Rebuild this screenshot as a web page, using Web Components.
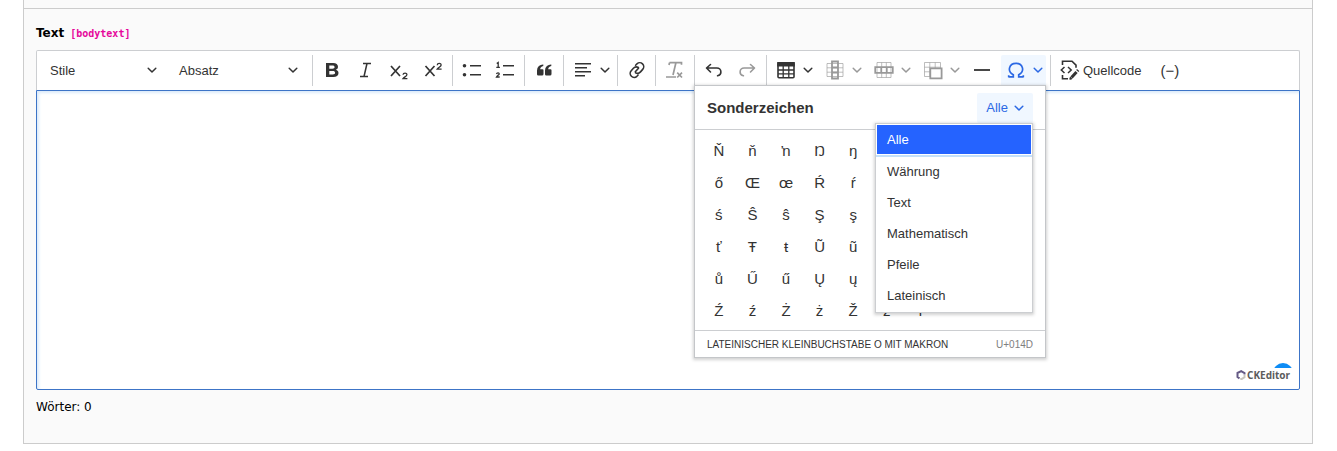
<!DOCTYPE html>
<html lang="de">
<head>
<meta charset="utf-8">
<title>Text bearbeiten</title>
<style>
body { margin: 0; background: #fff; font-family: "Liberation Sans", Arial, sans-serif; font-size: 13px; color: #333; }
</style>
</head>
<body>
<form-panel>
  <form-field label="Text" name="bodytext">
    <rich-editor></rich-editor>
  </form-field>
</form-panel>

<script>
const ICONS = {
  bold: '<path fill="currentColor" stroke="none" fill-rule="evenodd" d="M4 3h7.2c3 0 4.8 1.400 4.800 3.700 0 1.500-.8 2.600-2.200 3.100 1.700.4 2.700 1.600 2.700 3.300 0 2.600-2 3.900-5.200 3.900H4zm3.300 2.500v3.200h3.100c1.400 0 2.200-.6 2.200-1.600s-.8-1.600-2.200-1.600zm0 5.600v3.400h3.400c1.600 0 2.400-.6 2.400-1.700s-.8-1.700-2.400-1.700z"/>',
  italic: '<path d="M7 3.500h8M4 16.500h8M11 3.500l-3 13" stroke-width="1.500"/>',
  sub: '<path d="M2 6l9 10M11 6l-9 10" stroke-width="1.700"/><path d="M14 14.800c.2-2.400 4-2.300 3.900-.1-.1 1.500-2.700 2.300-3.900 4h4.400" stroke-width="1.300"/>',
  sup: '<path d="M2.500 6l9 10M11.500 6l-9 10" stroke-width="1.700"/><path d="M14.200 5.200c.2-2.400 4-2.300 3.900-.1-.1 1.500-2.700 2.300-3.900 4h4.400" stroke-width="1.300"/>',
  ul: '<path d="M8 5.750h11M8 14.750h11" stroke-width="1.600"/><g fill="currentColor" stroke="none"><circle cx="2.500" cy="5.750" r="1.800"/><circle cx="2.500" cy="14.750" r="1.800"/></g>',
  ol: '<path d="M8 5.750h11M8 14.750h11" stroke-width="1.600"/><path d="M1.700 3.500l1.500-1v4.600M1.300 7.300h3.600M1.500 14c.4-1.500 3-1.300 2.700.1-.2.900-1.900 1.500-2.700 2.900h3.200" stroke-width="1.300"/>',
  quote: '<path fill="currentColor" stroke="none" d="M3 10.400a6 6 0 0 1 6.300-6v1.500c-2 .4-3 1.600-3.100 3.300h2.300a1 1 0 0 1 1 1V14a1.500 1.500 0 0 1-1.500 1.500H4.300A1.300 1.300 0 0 1 3 14.200zM11 10.400a6 6 0 0 1 6.300-6v1.500c-2 .4-3 1.600-3.100 3.300h2.300a1 1 0 0 1 1 1V14a1.500 1.500 0 0 1-1.500 1.500h-3.700a1.300 1.300 0 0 1-1.300-1.300z"/>',
  align: '<path d="M2 3.750h16M2 7.750h12M2 11.750h16M2 15.750h10" stroke-width="1.500"/>',
  link: '<g stroke-width="1.600" stroke-linecap="round"><path d="M11.100 15l-1.200 1.300a4 4 0 0 1-5.700-5.600l2.200-2.500a4 4 0 0 1 5-.7M8.600 5.200L10 3.800a4 4 0 0 1 5.700 5.600l-2.200 2.500a4 4 0 0 1-5 .9M8.300 11.800l3.200-3.600"/></g>',
  clear: '<path d="M4.500 2.700h12v2M4.500 2.700L4 5M10.900 2.700L8 15M1 17h10" stroke-width="1.700"/><path d="M12.200 12.700l4.800 4.800M17 12.700l-4.800 4.800" stroke-width="1.700"/>',
  undo: '<path d="M6.500 4.500L2.500 8l4 4M2.700 8h10.200a4 4 0 0 1 4 4c0 1.900-1 3.300-3.300 3.800" stroke-width="1.600" stroke-linecap="round" stroke-linejoin="round"/>',
  redo: '<path d="M13.500 4.500l4 3.500-4 4M17.300 8H7.100a4 4 0 0 0-4 4c0 1.900 1 3.300 3.300 3.800" stroke-width="1.600" stroke-linecap="round" stroke-linejoin="round"/>',
  table: '<rect x="2" y="2.800" width="16" height="14.900" rx="1" stroke-width="1.600"/><path fill="currentColor" stroke="none" d="M1.200 2h17.600v4.500H1.200z"/><path d="M7.200 6v12M12.800 6v12M2 10h16M2 13.800h16" stroke-width="1.300"/>',
  column: '<path d="M2 3.500h16v13H2zM2 7.800h16M2 12.200h16" stroke-width="1" opacity=".65"/><path d="M7 1.500h6v17H7zM7 7.500h6M7 12.500h6" stroke-width="1.800"/>',
  row: '<path d="M3 2.500h14v15H3zM7.700 2.500v15M12.300 2.500v15" stroke-width="1" opacity=".65"/><path d="M1.200 7.200h17.600v5.600H1.200zM7.200 7.200v5.600M12.800 7.200v5.600" stroke-width="1.700"/>',
  merge: '<path d="M1.500 2.500h16v14h-16zM6.800 2.500v14M12.200 2.500v6M1.500 7.200h16M1.500 11.800h6" stroke-width="1" opacity=".65"/><path fill="#fff" d="M7.300 8.300h11.300v10H7.300z" stroke-width="1.800"/>',
  line: '<path d="M2 10h16" stroke-width="1.800"/>',
  omega: '<path d="M2.500 16.800h4.800v-2C1 11.500 2.700 3.300 10 3.300s9 8.200 2.700 11.500v2h4.800M2.700 17.300v-2M17.300 17.300v-2" stroke-width="1.700"/>',
  source: '<path d="M2.500 5V1.200h9.500l4 4v2.500M2.500 15v3.800h5.500" stroke-width="1.600"/><path d="M4.500 7l-3.200 3 3.200 3M8 7l3.200 3L8 13" stroke-width="1.500"/><path d="M11.500 17.500l5-5.500" stroke-width="3"/><path d="M9.800 19.300l.5-2.200 1.700 1.700z" fill="currentColor"/><path d="M17.300 11l.8-.9" stroke-width="3"/>'
};
const svg = (name, size = 20) =>
  `<svg width="${size}" height="${size}" viewBox="0 0 20 20" fill="none" stroke="currentColor" aria-hidden="true">${ICONS[name]}</svg>`;
const CHEVRON = '<svg class="chevron" width="10" height="10" viewBox="0 0 10 10" fill="none" stroke="currentColor" stroke-width="1.500" stroke-linecap="round" stroke-linejoin="round" aria-hidden="true"><path d="M1.200 3.300L5 7l3.800-3.700"/></svg>';

const define = (name, render) => customElements.define(name, class extends HTMLElement {
  constructor() {
    super();
    this.attachShadow({ mode: 'open' });
  }
  connectedCallback() {
    this.shadowRoot.innerHTML = render(this);
  }
});

const BUTTON_CSS = `
  button { box-sizing: border-box; display: flex; align-items: center; width: 100%; height: 30px;
    margin: 0; padding: 0 5px; border: 0; border-radius: 2px; background: none;
    font: inherit; color: inherit; white-space: nowrap; }
  button:disabled { color: #999; }
  svg { flex: none; display: block; }
`;

/* Icon button, with a chevron when it opens a menu */
define('tool-button', el => `
  <style>
    :host { display: block; flex: none; width: 30px; color: #333; }
    :host([menu]) { width: 45px; }
    :host([active]) { color: #2b68e4; }
    :host([active]) button { background: #f0f7ff; border-radius: 2px 2px 0 0; }
    :host([wide]) { width: auto; }
    :host([wide]) button { gap: 3px; }
    .chevron { margin-left: 7px; }
    ${BUTTON_CSS}
  </style>
  <button type="button" ${el.hasAttribute('off') ? 'disabled' : ''} ${el.hasAttribute('wide') ? '' : `aria-label="${el.getAttribute('title-text')}"`}>
    ${el.hasAttribute('icon') ? svg(el.getAttribute('icon')) : ''}<slot></slot>${el.hasAttribute('menu') ? CHEVRON : ''}
  </button>`);

/* Drop-down button with a text label */
define('label-dropdown', () => `
  <style>
    :host { display: block; flex: none; }
    ${BUTTON_CSS}
    button { justify-content: space-between; padding: 0 10px 0 8px; gap: 8px; }
    :host([active]) button { color: #2b68e4; background: #f0f7ff; padding: 0 9px; gap: 6px; }
  </style>
  <button type="button" aria-haspopup="listbox"><slot></slot>${CHEVRON}</button>`);

define('tool-group', () => `
  <style>
    :host { display: flex; flex: none; justify-content: space-between; position: relative; }
  </style>
  <slot></slot>`);

define('tool-separator', () => `
  <style>
    :host { display: block; flex: none; width: 1px; height: 31px; background: #ccced1; }
  </style>`);

/* Open list of character categories */
define('category-list', () => `
  <style>
    :host { display: block; background: #fff; border: 1px solid #ccced1; box-sizing: border-box;
      box-shadow: 0 1px 3px 1px rgba(0,0,0,.18); }
    ul { list-style: none; margin: 0; padding: 1px; }
    button { box-sizing: border-box; display: block; width: 100%; height: 31px; margin: 0; padding: 0 10px;
      border: 0; background: none; font: inherit; color: #333; text-align: left; }
    .on { background: #2563ff; color: #fff; height: 29px; margin-bottom: 2px; box-shadow: 0 0 0 1px #fff, 0 2px 0 1px #c4e0fa; }
  </style>
  <ul>
    ${['Alle', 'Währung', 'Text', 'Mathematisch', 'Pfeile', 'Lateinisch']
      .map((t, i) => `<li><button type="button" class="${i ? '' : 'on'}">${t}</button></li>`).join('')}
  </ul>`);

/* Cells that lie fully behind the open category list are not painted */
const behindList = i => i < 50 && i % 10 > 4;

define('special-characters', () => `
  <style>
    :host { display: block; box-sizing: border-box; width: 352px; background: #fff; border: 1px solid #c4c6c9;
      box-shadow: 0 1px 3px 1px rgba(0,0,0,.18); color: #333; }
    header { position: relative; display: flex; align-items: center; justify-content: space-between;
      height: 43px; padding: 0 12px; border-bottom: 1px solid #ccced1; }
    h2 { margin: 0; font-size: 15px; line-height: 20px; }
    category-list { position: absolute; right: 12px; top: 37px; width: 158px; z-index: 1; }
    .grid { box-sizing: border-box; display: grid; grid-template-columns: repeat(10, 1fr); grid-auto-rows: 1fr;
      gap: 2px 10px; height: 200px; padding: 6px 12px 5px; }
    .grid button { margin: 0; padding: 0; border: 0; background: none; font: inherit; font-size: 15px; color: inherit; }
    .grid .behind { visibility: hidden; }
    footer { display: flex; justify-content: space-between; align-items: center; height: 26px;
      padding: 0 12px; border-top: 1px solid #ccced1; font-size: 10px; }
    .code { color: #808080; }
  </style>
  <header>
    <h2>Sonderzeichen</h2>
    <label-dropdown active>Alle</label-dropdown>
    <category-list></category-list>
  </header>
  <div class="grid">
    ${[...'ŇňŉŊŋŌōŎŏŐőŒœŔŕŖŗŘřŚśŜŝŞşŠšŢţŤťŦŧŨũŪūŬŭŮůŰűŲųŴŵŶŷŸŹźŻżŽžſ']
      .map((c, i) => `<button type="button"${behindList(i) ? ' class="behind"' : ''}>${behindList(i) ? '' : c}</button>`).join('')}
  </div>
  <footer><span>LATEINISCHER KLEINBUCHSTABE O MIT MAKRON</span><span class="code">U+014D</span></footer>`);

define('editor-toolbar', () => `
  <style>
    :host { display: flex; align-items: flex-start; gap: 4px; box-sizing: border-box; height: 40px;
      padding: 4px 5px; background: #fff; border: 1px solid #ccced1; border-bottom: 0; border-radius: 2px 2px 0 0; }
    .style { width: 125px; }
    .heading { width: 137px; }
    .four { width: 131px; }
    .two { width: 63px; }
    .single { width: 29px; }
    .tables { gap: 4px; }
    .hyphen { font-size: 15px; margin-left: 5px; }
    special-characters { position: absolute; right: 0; top: 100%; z-index: 2; }
  </style>
  <label-dropdown class="style">Stile</label-dropdown>
  <label-dropdown class="heading">Absatz</label-dropdown>
  <tool-separator></tool-separator>
  <tool-group class="four">
    <tool-button icon="bold" title-text="Fett"></tool-button>
    <tool-button icon="italic" title-text="Kursiv"></tool-button>
    <tool-button icon="sub" title-text="Tiefgestellt"></tool-button>
    <tool-button icon="sup" title-text="Hochgestellt"></tool-button>
  </tool-group>
  <tool-separator></tool-separator>
  <tool-group class="two">
    <tool-button icon="ul" title-text="Aufzählungsliste"></tool-button>
    <tool-button icon="ol" title-text="Nummerierte Liste"></tool-button>
  </tool-group>
  <tool-separator></tool-separator>
  <tool-button icon="quote" title-text="Blockzitat"></tool-button>
  <tool-separator></tool-separator>
  <tool-button icon="align" menu title-text="Textausrichtung"></tool-button>
  <tool-separator></tool-separator>
  <tool-button class="single" icon="link" title-text="Link"></tool-button>
  <tool-separator></tool-separator>
  <tool-button icon="clear" off title-text="Formatierung entfernen"></tool-button>
  <tool-separator></tool-separator>
  <tool-group class="two">
    <tool-button icon="undo" title-text="Rückgängig"></tool-button>
    <tool-button icon="redo" off title-text="Wiederherstellen"></tool-button>
  </tool-group>
  <tool-separator></tool-separator>
  <tool-group class="tables">
    <tool-button icon="table" menu title-text="Tabelle einfügen"></tool-button>
    <tool-button icon="column" menu off title-text="Spalte"></tool-button>
    <tool-button icon="row" menu off title-text="Zeile"></tool-button>
    <tool-button icon="merge" menu off title-text="Zellen verbinden"></tool-button>
    <tool-button icon="line" title-text="Horizontale Linie"></tool-button>
    <tool-button icon="omega" menu active title-text="Sonderzeichen"></tool-button>
    <special-characters></special-characters>
  </tool-group>
  <tool-separator></tool-separator>
  <tool-button icon="source" wide>Quellcode</tool-button>
  <tool-button class="hyphen" wide>(−)</tool-button>`);

define('powered-by', () => `
  <style>
    :host { display: block; font: 700 10px/12px "Noto Sans", sans-serif; color: #5c5c5c; }
    .dot { position: absolute; right: -2px; bottom: 13px; width: 18px; height: 5px; overflow: hidden; }
    .dot svg { display: block; }
    a { color: inherit; text-decoration: none; display: flex; align-items: center; gap: 1px; }
  </style>
  <span class="dot"><svg width="18" height="18" viewBox="0 0 18 18"><circle cx="9" cy="10" r="10" fill="#0d8cf5"/></svg></span>
  <a href="#"><svg width="10" height="10" viewBox="0 0 10 10" fill="none" stroke-width="2" aria-hidden="true"><path d="M8.500 4.500V3L5.200 1.200 1.500 3v4l2 1.400" stroke="#655a85"/><path d="M4.300 9l1.500-.1L8.500 7.300V5" stroke="#c9c6bd"/></svg><span>CKEditor</span></a>`);

define('rich-editor', () => `
  <style>
    :host { display: block; }
    .area { position: relative; box-sizing: border-box; height: 300px; background: #fff;
      border: 1px solid #3d74c7; border-radius: 0 0 2px 2px; box-shadow: inset 2px 2px 3px #dcebfa; }
    .text { height: 100%; outline: 0; }
    powered-by { position: absolute; right: 9px; bottom: 8px; }
    .count { margin-top: 8px; font: 12px/18px "DejaVu Sans", Verdana, sans-serif; color: #000; }
  </style>
  <editor-toolbar></editor-toolbar>
  <div class="area">
    <div class="text" contenteditable="true" role="textbox" aria-label="Text" aria-multiline="true"></div>
    <powered-by></powered-by>
  </div>
  <div class="count">Wörter: 0</div>`);

define('form-field', el => `
  <style>
    :host { display: block; padding: 15px 12px 27px; }
    .label { display: flex; align-items: baseline; gap: 6px; height: 18px; margin-bottom: 8px;
      font: 700 12px/18px "DejaVu Sans", Verdana, sans-serif; color: #000; }
    code { font: 700 10px/18px "DejaVu Sans Mono", monospace; color: #e6079b; }
  </style>
  <div class="label"><span>${el.getAttribute('label')}</span><code>[${el.getAttribute('name')}]</code></div>
  <slot></slot>`);

define('form-panel', () => `
  <style>
    :host { display: block; margin: 0 24px 0 23px; background: #fafafa; border: 1px solid #ccc; border-top: 0; }
    .previous { height: 8px; border-bottom: 1px solid #ccc; }
  </style>
  <div class="previous"></div>
  <slot></slot>`);
</script>
</body>
</html>
